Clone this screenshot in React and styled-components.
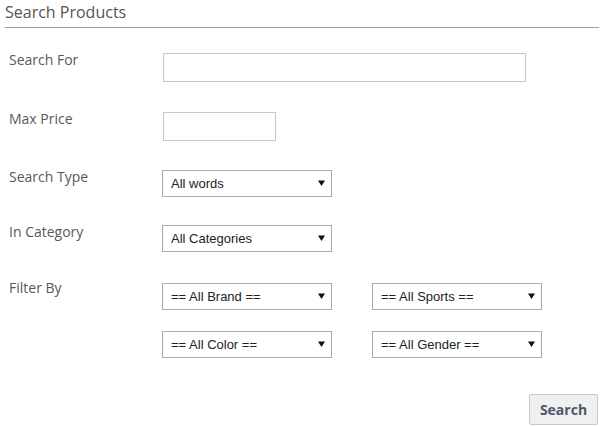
import React from "react";
import styled, { createGlobalStyle } from "styled-components";

const GlobalStyle = createGlobalStyle`
  body {
    margin: 0;
    background: #ffffff;
    font-family: "Open Sans", "Liberation Sans", sans-serif;
  }
`;

const filters = [
  "== All Brand ==",
  "== All Sports ==",
  "== All Color ==",
  "== All Gender ==",
];

export default function App() {
  return (
    <>
      <GlobalStyle />
      <Page>
        <Title>Search Products</Title>
        <Form>
          <Row $top={25}>
            <Label>Search For</Label>
            <TextInput $width={363} />
          </Row>
          <Row $top={30}>
            <Label>Max Price</Label>
            <TextInput $width={113} />
          </Row>
          <Row $top={29}>
            <Label>Search Type</Label>
            <Dropdown value="All words" />
          </Row>
          <Row $top={28}>
            <Label>In Category</Label>
            <Dropdown value="All Categories" />
          </Row>
          <Row $top={31}>
            <Label $lift={2}>Filter By</Label>
            <FilterGrid>
              {filters.map((f) => (
                <Dropdown key={f} value={f} />
              ))}
            </FilterGrid>
          </Row>
          <Actions>
            <SearchButton type="button">Search</SearchButton>
          </Actions>
        </Form>
      </Page>
    </>
  );
}

function Dropdown({ value }) {
  return (
    <SelectBox>
      <Select defaultValue={value}>
        <option>{value}</option>
      </Select>
      <Caret viewBox="0 0 7 6">
        <path d="M0 0.5 H7 L3.5 6 Z" fill="#111" />
      </Caret>
    </SelectBox>
  );
}

const Page = styled.div`
  width: 601px;
  height: 426px;
  overflow: hidden;
  box-sizing: border-box;
  padding-right: 2px;
`;

const Title = styled.h2`
  margin: 0 0 0 5px;
  padding: 2px 0 4px;
  font-size: 16px;
  font-weight: 400;
  line-height: 21px;
  color: #555;
  border-bottom: 1px solid #a0a0a0;
`;

const Form = styled.div`
  display: flex;
  flex-direction: column;
`;

const Row = styled.div`
  display: grid;
  grid-template-columns: 153px auto;
  align-items: start;
  margin-top: ${(p) => p.$top}px;
  padding-left: 9px;
`;

const Label = styled.label`
  font-size: 14px;
  line-height: 14px;
  color: #595959;
  margin-top: ${(p) => -(p.$lift || 0)}px;
`;

const TextInput = styled.input`
  width: ${(p) => p.$width}px;
  height: 29px;
  box-sizing: border-box;
  margin: 0 0 0 1px;
  border: 1px solid #c8c8c8;
  background: #fff;
  outline: none;
`;

const FilterGrid = styled.div`
  display: grid;
  grid-template-columns: 170px 170px;
  column-gap: 40px;
  row-gap: 21px;
`;

const SelectBox = styled.div`
  position: relative;
  width: 170px;
  height: 27px;
`;

const Select = styled.select`
  appearance: none;
  width: 100%;
  height: 100%;
  box-sizing: border-box;
  margin: 0;
  padding: 0 20px 0 8px;
  border: 1px solid #a9a9a9;
  border-radius: 0;
  background: #fff;
  font-family: "Liberation Sans", Arial, sans-serif;
  font-size: 13px;
  color: #222;
  outline: none;
`;

const Caret = styled.svg`
  position: absolute;
  right: 7px;
  top: 10px;
  width: 7px;
  height: 6px;
  pointer-events: none;
`;

const Actions = styled.div`
  display: flex;
  justify-content: flex-end;
  margin-top: 36px;
  padding-right: 1px;
`;

const SearchButton = styled.button`
  width: 69px;
  height: 31px;
  border: 1px solid #c6c8ca;
  border-radius: 2px;
  background: #eef0f2;
  font-family: "Open Sans", "Liberation Sans", sans-serif;
  font-size: 14px;
  font-weight: 700;
  color: #4e5868;
  cursor: pointer;
`;
